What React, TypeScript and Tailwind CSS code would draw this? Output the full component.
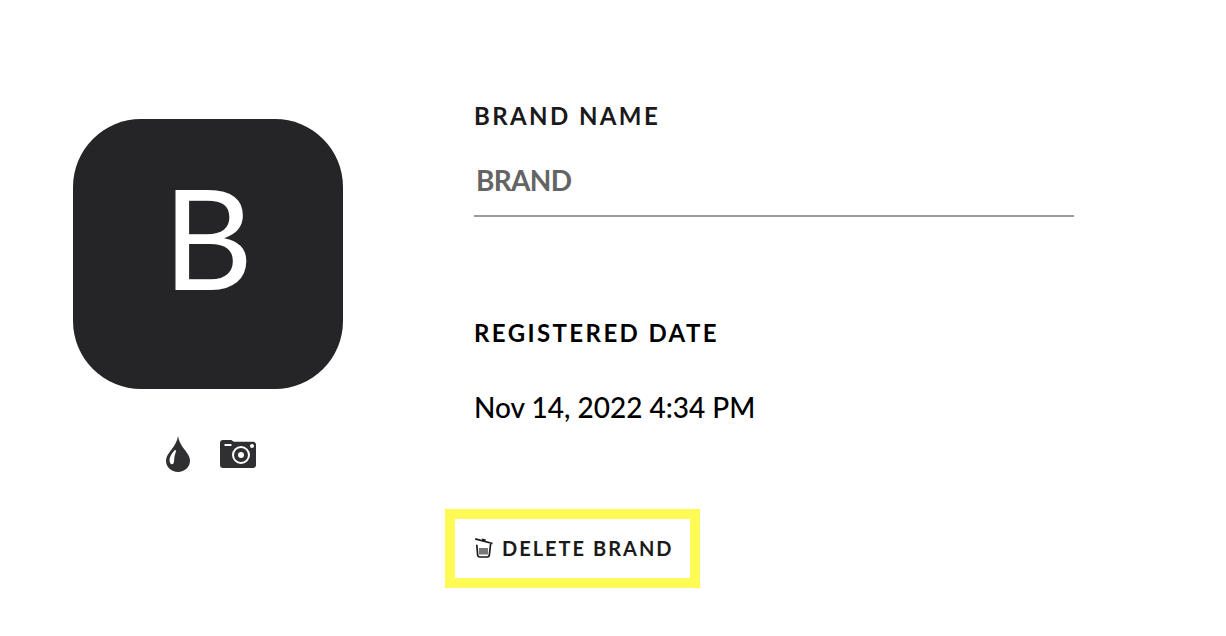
function DropIcon() {
  return (
    <svg viewBox="0 0 36 36" className="h-9 w-9" aria-hidden="true">
      <path
        fill="#303032"
        d="M18 0c.8 5.200 3.200 9.200 6.300 13.200 3.200 4.300 5.700 7.300 5.700 11.600C30 31.200 24.700 36 18 36S6 31.200 6 24.800c0-4.300 2.500-7.300 5.700-11.600C14.800 9.200 17.200 5.200 18 0z"
      />
      <path
        fill="#fff"
        d="M14.400 14.500c-2.600 3-4.900 6.200-4.900 9.500 0 2.400 1 4.200 2.400 4.200 1.600 0 2.100-1.600 2.200-3.700.1-3.500.9-6.200 1.800-9.100.4-1.300-.6-2-1.500-.9z"
      />
    </svg>
  )
}

function CameraIcon() {
  return (
    <svg viewBox="0 0 36 36" className="h-9 w-9" aria-hidden="true">
      <path
        fill="#303032"
        d="M3 4h8c1.200 0 2 1.800 3.400 1.800H33c1.800 0 3 1.200 3 3V29c0 1.800-1.200 3-3 3H3c-1.800 0-3-1.200-3-3V7c0-1.800 1.200-3 3-3z"
      />
      <rect x="4.500" y="8" width="7" height="2" rx=".6" fill="#fff" />
      <circle cx="32" cy="10" r="2" fill="#fff" />
      <circle cx="21" cy="19" r="8" fill="none" stroke="#fff" strokeWidth="2" />
      <circle cx="21" cy="19" r="3" fill="#fff" />
    </svg>
  )
}

function TrashIcon() {
  return (
    <svg viewBox="0 0 20 20" className="h-5 w-5" aria-hidden="true">
      <path
        d="M1.200 .9L18.500 5.500M8.500 2.800l.4-1.300 2 .5-.3 1.300"
        fill="none"
        stroke="#1a1a1a"
        strokeWidth="1.700"
      />
      <path
        d="M2.800 6.800l.8 9.700c.1 1.300.9 2.500 2.200 2.500h7.400c1.300 0 2.100-1.200 2.200-2.500l1.200-10.500"
        fill="none"
        stroke="#1a1a1a"
        strokeWidth="1.700"
      />
      <path d="M5 10h9v6.500H5z" fill="#777" />
    </svg>
  )
}

function App() {
  return (
    <main className="flex items-start gap-[131px] bg-white pl-[73px] pr-8 font-['Lato',sans-serif]">
      {/* Brand avatar */}
      <section className="mt-[119px] w-[270px] shrink-0">
        <div className="flex h-[270px] items-center justify-center rounded-[68px] bg-[#252527] pb-9">
          <span className="text-[140px] leading-none text-white">B</span>
        </div>
        <div className="mt-[47px] flex justify-center gap-6">
          <button type="button" aria-label="Change color">
            <DropIcon />
          </button>
          <button type="button" aria-label="Upload photo">
            <CameraIcon />
          </button>
        </div>
      </section>

      {/* Brand details */}
      <section className="mt-[100px] max-w-[600px] flex-1">
        <label htmlFor="brand-name" className="block text-2xl font-bold tracking-widest text-[#1a1a1a]">
          BRAND NAME
        </label>
        <input
          id="brand-name"
          type="text"
          defaultValue="BRAND"
          className="mt-4 block h-[69px] w-full border-b-2 border-[#9b9b9b] pb-1 pl-0.5 text-[28px] font-bold tracking-tight text-[#646464] outline-none"
        />

        <h2 className="mt-[100px] text-2xl font-bold tracking-widest text-black">REGISTERED DATE</h2>
        <p className="mt-10 text-[28px] leading-9 font-medium text-black">Nov 14, 2022 4:34 PM</p>

        <button
          type="button"
          className="mt-[84px] -ml-[29px] flex h-[79px] items-center gap-2 border-10 border-[#fffb54] pr-4 pb-0.5 pl-[19px] text-xl font-bold tracking-widest whitespace-nowrap text-[#1a1a1a]"
        >
          <TrashIcon />
          DELETE BRAND
        </button>
      </section>
    </main>
  )
}

export default App
